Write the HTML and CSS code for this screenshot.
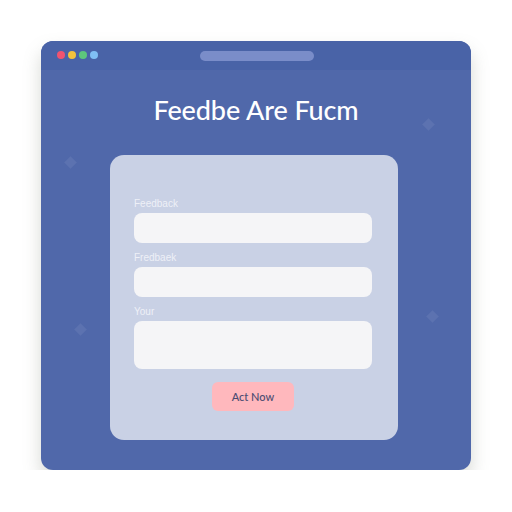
FILE: index.html
```html
<!DOCTYPE html>
<html lang="en">
<head>
    <meta charset="UTF-8">
    <meta name="viewport" content="width=device-width, initial-scale=1.0">
    <title>Feedback Form</title>
    <link rel="stylesheet" href="styles.css">
</head>
<body>
    <div class="window">
        <div class="titlebar">
            <div class="dots">
                <span class="dot red"></span>
                <span class="dot yellow"></span>
                <span class="dot green"></span>
                <span class="dot blue"></span>
            </div>
            <div class="address-bar"></div>
        </div>

        <div class="window-body">
            <span class="sparkle s1"></span>
            <span class="sparkle s2"></span>
            <span class="sparkle s3"></span>
            <span class="sparkle s4"></span>

            <h1>Feedbe Are Fucm</h1>

            <form class="card">
                <label class="field-label">Feedback</label>
                <div class="field"></div>
                <label class="field-label">Fredbaek</label>
                <div class="field"></div>
                <label class="field-label">Your</label>
                <div class="field big"></div>
                <button type="button" class="act-button">Act Now</button>
            </form>
        </div>
    </div>
</body>
</html>
```

FILE: styles.css
```css
body {
    margin: 0;
    background-color: #ffffff;
    font-family: Lato, "Open Sans", sans-serif;
    padding: 41px 0 0 41px;
}

.window {
    width: 430px;
    height: 429px;
    background-color: #5068aa;
    border-radius: 12px;
    overflow: hidden;
    display: flex;
    flex-direction: column;
    box-shadow: 0 10px 18px rgba(110, 120, 100, 0.28);
}

.titlebar {
    height: 29px;
    background-color: #4963a7;
    display: flex;
    align-items: center;
    padding: 0 16px;
    position: relative;
}

.dots {
    display: flex;
    gap: 3px;
    margin-top: -2px;
}

.dot {
    width: 8px;
    height: 8px;
    border-radius: 50%;
}

.red { background-color: #ef5370; }
.yellow { background-color: #f3c23c; }
.green { background-color: #5dc67c; }
.blue { background-color: #80bff4; }

.address-bar {
    position: absolute;
    left: 159px;
    top: 10px;
    width: 114px;
    height: 10px;
    border-radius: 5px;
    background-color: #7a8dc9;
}

.window-body {
    flex-grow: 1;
    display: flex;
    flex-direction: column;
    align-items: center;
    position: relative;
}

h1 {
    margin: 23px 0 0;
    height: 62px;
    font-size: 27px;
    font-weight: 500;
    color: #ffffff;
    letter-spacing: -0.1px;
}

.card {
    width: 238px;
    height: 243px;
    margin-left: -4px;
    padding: 42px 26px 0 24px;
    background-color: #c9d1e5;
    border-radius: 14px;
    display: flex;
    flex-direction: column;
}

.field-label {
    font-family: "Liberation Sans", sans-serif;
    font-size: 10px;
    line-height: 13px;
    color: #eef0f7;
    margin-bottom: 3px;
}

.field {
    height: 30px;
    background-color: #f5f5f7;
    border-radius: 8px;
    margin-bottom: 8px;
}

.field.big {
    height: 48px;
    margin-bottom: 13px;
}

.act-button {
    align-self: center;
    width: 82px;
    height: 29px;
    border: none;
    border-radius: 6px;
    background-color: #ffb8bd;
    color: #4b4c72;
    font-family: Lato, sans-serif;
    font-size: 11px;
    font-weight: 500;
    cursor: pointer;
}

/* faint diamond sparkles behind the form */
.sparkle {
    position: absolute;
    width: 9px;
    height: 9px;
    background-color: rgba(255, 255, 255, 0.07);
    transform: rotate(45deg);
}

.s1 { left: 25px; top: 88px; }
.s2 { left: 35px; top: 255px; }
.s3 { left: 383px; top: 50px; }
.s4 { left: 387px; top: 242px; }
```
